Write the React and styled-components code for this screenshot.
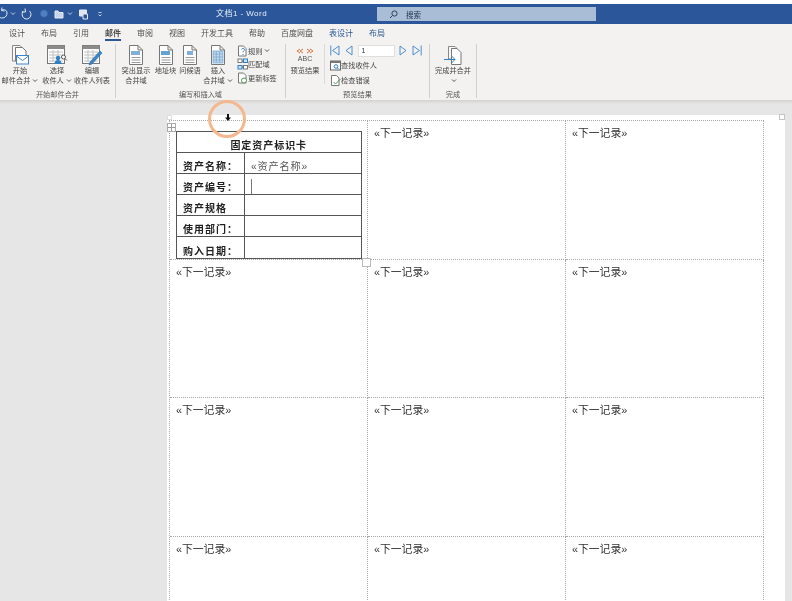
import React from "react";
import styled, { createGlobalStyle } from "styled-components";

const Global = createGlobalStyle`
  html, body { margin: 0; padding: 0; background: #e6e6e6; }
  * { box-sizing: border-box; }
`;
const FONT = `"Liberation Sans", "Noto Sans CJK SC", sans-serif`;

const Shell = styled.div`
  width: 792px; height: 601px; overflow: hidden; display: flex; flex-direction: column;
  font-family: ${FONT}; background: #e6e6e6; filter: blur(0.45px);
`;
const TopGap = styled.div`height: 4px; background: #fff; flex: none;`;
const TitleBar = styled.header`
  height: 20px; flex: none; background: #2b579a; display: grid;
  grid-template-columns: 377px 219px 1fr; align-items: center; position: relative;
`;
const Qat = styled.div`display: flex; align-items: center; height: 100%;`;
const DocTitle = styled.div`
  position: absolute; left: 216px; top: 4px; font-size: 8px; line-height: 12px; color: #e8eef7; white-space: nowrap; letter-spacing: .45px;
`;
const Search = styled.div`
  height: 14px; background: #a9bdd6; display: flex; align-items: center; padding-left: 12px; gap: 8px;
  font-size: 7.5px; color: #1f2f48;
`;
const Tabs = styled.nav`
  height: 18px; flex: none; background: #f3f2f1; display: flex; gap: 16px; padding-left: 9px; align-items: flex-start;
`;
const Tab = styled.div`
  font-size: 8px; line-height: 20px; height: 17px; white-space: nowrap;
  color: ${p => p.$ctx ? "#2b579a" : "#505050"};
  font-weight: ${p => p.$active ? 700 : 400};
  border-bottom: ${p => p.$active ? "2px solid #2b579a" : "0"};
`;
const Ribbon = styled.section`
  height: 59px; flex: none; background: #f3f2f1; display: flex; padding-top: 2px;
  border-bottom: 1px solid #d6d5d3;
`;
const Group = styled.div`
  width: ${p => p.$w}px; flex: none; display: flex; flex-direction: column; border-right: 1px solid #d2d0ce; margin-bottom: 2px;
`;
const GroupBody = styled.div`height: 45px; display: flex; flex: none;`;
const GroupLabel = styled.div`
  font-size: 7.2px; line-height: 10px; text-align: center; color: #555; white-space: nowrap; margin-top: 1px;
`;
const Btn = styled.div`
  width: ${p => p.$w}px; flex: none; display: flex; flex-direction: column; align-items: center;
  font-size: 7.2px; line-height: 10px; color: #444; white-space: nowrap;
`;
const IconSlot = styled.div`height: 22px; display: flex; align-items: flex-end; justify-content: center; flex: none;`;
const SmallList = styled.div`
  display: flex; flex-direction: column; gap: ${p => p.$g ?? 3}px; margin-left: ${p => p.$ml || 0}px; padding-top: ${p => p.$pt || 0}px;
`;
const SmallRow = styled.div`
  display: flex; align-items: center; gap: ${p => p.$gap ?? 0}px; height: 11px; font-size: 7.2px; color: #444; white-space: nowrap;
`;
const Sep = styled.div`width: 1px; height: 40px; background: #dcdbd9; flex: none; margin-top: 0;`;
const RecNum = styled.div`
  width: 37px; height: 12px; background: #fff; border: 1px solid #dedede; font-size: 7px; line-height: 10px; padding-left: 3px; color: #333;
`;
const Shadow = styled.div`height: 3px; flex: none; background: linear-gradient(#d8d7d5, #e6e6e6);`;
const Canvas = styled.main`flex: 1; min-height: 0; padding: 11px 7px 0 167px;`;
const Page = styled.div`
  position: relative; background: #fff; height: 600px; padding: 5px 0 0 2px;
`;
const Grid = styled.div`
  display: grid; grid-template-columns: repeat(3, 198px); grid-auto-rows: 138.7px; width: 595px;
  border-top: 1px dotted #a8a8a8; border-left: 1px dotted #a8a8a8;
`;
const Cell = styled.div`
  border-right: 1px dotted #a8a8a8; border-bottom: 1px dotted #a8a8a8; padding: 6px 0 0 6px;
  font-size: 10.8px; line-height: 13px; color: #333; white-space: nowrap; overflow: visible;
`;
const CardCell = styled(Cell)`padding-top: 10px;`;
const Card = styled.table`
  border-collapse: collapse; width: 185.5px; table-layout: fixed; font-size: 10px; color: #222;
  td { border: 1px solid #555; height: 21.1px; padding: 0 0 0 6px; vertical-align: bottom; line-height: 13px; }
`;
const LabelCol = styled.col`width: 68px;`;
const TitleCell = styled.td`text-align: center; font-weight: 700; letter-spacing: .95px; && { padding-left: 0; }`;
const LabelCell = styled.td`font-weight: 700; letter-spacing: 1px;`;
const ValueCell = styled.td`color: #555; letter-spacing: .8px; font-size: 10.2px;`;
const Caret = styled.span`display: block; width: 1px; height: 15px; background: #777;`;
const Mark = styled.div`
  position: absolute; width: ${p => p.$s}px; height: ${p => p.$s}px; background: #fff;
  border: 1px solid ${p => p.$c || "#bbb"};
  left: ${p => p.$x}px; top: ${p => p.$y}px; display: flex; align-items: center; justify-content: center;
`;
const Ring = styled.div`
  position: absolute; left: 41px; top: -15px; width: 38px; height: 38px; border-radius: 50%;
  border: 3px solid #f5b88e; pointer-events: none;
`;
const Pointer = styled.svg`position: absolute; left: 58px; top: -1px;`;

const S = ({ w = 20, h = 22, children }) => (
  <svg width={w} height={h} viewBox={`0 0 ${w} ${h}`} fill="none">{children}</svg>
);
const Chev = ({ c = "#555" }) => (
  <svg width="6" height="5" viewBox="0 0 6 5" style={{ marginLeft: 2 }}><path d="M1 1.5 3 3.5 5 1.5" stroke={c} fill="none" /></svg>
);
const Doc = ({ x = 3, y = 1, w = 14, h = 19 }) => (
  <path d={`M${x + .5} ${y + .5}H${x + w - 5}L${x + w - .5} ${y + 5}V${y + h - .5}H${x + .5}ZM${x + w - 5} ${y + .5}V${y + 5}H${x + w - .5}`} stroke="#777" fill="#fdfdfd" />
);
const Lines = ({ x = 6, y = 12, n = 3, w = 8 }) => (
  <path d={Array.from({ length: n }, (_, i) => `M${x} ${y + i * 2.5 + .5}h${w}`).join("")} stroke="#9a9a9a" />
);
const MailStart = () => (
  <S>
    <path d="M2.5 1.5H10L13 4.5V17H2.5Z" stroke="#888" fill="#f8f8f8" />
    <path d="M5.5 3.5H12.5L16 7V17H5.5Z" stroke="#777" fill="#fff" />
    <rect x="6.5" y="11.5" width="12" height="8.5" fill="#fff" stroke="#3a85c9" />
    <path d="M6.5 12 12.5 16.5 18.5 12" stroke="#3a85c9" />
  </S>
);
const TableIcon = ({ children }) => (
  <S w={22}>
    <rect x="1.5" y="1.5" width="17" height="18" fill="#fff" stroke="#777" />
    <rect x="1.5" y="1.5" width="17" height="3.5" fill="#8a8a8a" />
    <path d="M3 8h14M3 11h14M3 14h14M3 17h14M7 6v12M12 6v12" stroke="#c0c0c0" />
    {children}
  </S>
);
const Select = () => (
  <TableIcon>
    <circle cx="12" cy="14" r="2.2" fill="#2f7fc7" />
    <path d="M8.5 20c0-3 1.5-4 3.5-4s3.5 1 3.5 4Z" fill="#2f7fc7" />
    <circle cx="17.5" cy="13" r="2" stroke="#555" fill="#fff" />
    <path d="M19 14.5 21 16.5" stroke="#555" />
  </TableIcon>
);
const Edit = () => (
  <TableIcon>
    <path d="M9 18 19 7l2 2-10 11-3 1Z" fill="#3a85c9" stroke="#2c6da8" strokeWidth=".6" />
  </TableIcon>
);
const FieldDoc = ({ fill = "#7fb0d8", grid, kind }) => (
  <S w={16}>
    <Doc x={1} y={1} w={14} h={20} />
    {grid ? (
      <g>
        <rect x="3" y="7" width="10" height="12" fill="#bcd6ec" stroke="#6ea0c9" strokeWidth=".7" />
        <path d="M3 10h10M3 13h10M3 16h10M6.3 7v12M9.6 7v12" stroke="#6ea0c9" strokeWidth=".6" />
      </g>
    ) : (
      <g>
        <rect x={kind === 2 ? 5 : 3} y="7" width={kind === 2 ? 6 : 9} height="4" fill={fill} />
        <Lines x={3.5} y={13} n={3} w={9} />
      </g>
    )}
  </S>
);
const Rule = () => (
  <S w={11} h={12}>
    <path d="M1.5 1h5L9 3.5V11H1.5Z" stroke="#777" fill="#fff" />
    <path d="M4.5 4.5c.5-1.5 3-1.5 3 .3 0 1.2-1.5 1.2-1.5 2.6M6 9v1" stroke="#2f7fc7" />
  </S>
);
const Match = () => (
  <S w={11} h={12}>
    <rect x="1" y="1" width="4" height="3.5" stroke="#777" fill="#fff" />
    <rect x="6.5" y="1" width="4" height="3.5" stroke="#2f7fc7" fill="#cfe2f3" />
    <rect x="1" y="7.5" width="4" height="3.5" stroke="#2f7fc7" fill="#cfe2f3" />
    <rect x="6.5" y="7.5" width="4" height="3.5" stroke="#777" fill="#fff" />
    <path d="M5 3h1.5M5 9h1.5" stroke="#555" />
  </S>
);
const Update = () => (
  <S w={11} h={12}>
    <path d="M1.5 1h5L9 3.5V11H1.5Z" stroke="#777" fill="#fff" />
    <circle cx="7" cy="8.5" r="2.5" stroke="#4d9a57" fill="#fff" />
  </S>
);
const Abc = () => (
  <svg width="30" height="20" viewBox="0 0 30 20" fill="none">
    <path d="M10 3 7 5l3 2M13 3l-3 2 3 2M17 3l3 2-3 2M20 3l3 2-3 2" stroke="#e0713c" />
    <text x="15" y="15" textAnchor="middle" fontSize="7" fill="#555" fontFamily="Liberation Sans">ABC</text>
  </svg>
);
const NavIcon = ({ dir, bar, w = 10 }) => (
  <svg width={w} height="11" viewBox={`0 0 ${w} 11`} fill="none" stroke="#3a85c9" strokeWidth=".9">
    {dir === "l"
      ? <>{bar && <path d="M.8 .5v10" />}<path d={`M${w - 1} 1 ${bar ? 2.5 : 1} 5.5 ${w - 1} 10Z`} /></>
      : <>{bar && <path d={`M${w - .8} .5v10`} />}<path d={`M1 1 ${bar ? w - 2.5 : w - 1} 5.5 1 10Z`} /></>}
  </svg>
);
const Find = () => (
  <S w={11} h={11}>
    <rect x=".5" y="1" width="10" height="9" fill="#fff" stroke="#666" />
    <rect x=".5" y="1" width="10" height="2" fill="#777" />
    <circle cx="6" cy="6.5" r="1.8" stroke="#2f7fc7" />
    <path d="M7.5 8 9 9.5" stroke="#2f7fc7" />
  </S>
);
const Check = () => (
  <S w={11} h={11}>
    <path d="M1.5 .5h5L9 3v7.5H1.5Z" stroke="#777" fill="#fff" />
    <path d="M3.5 7l2 2 5-5" stroke="#4d9a57" />
  </S>
);
const Finish = () => (
  <S w={20} h={21}>
    <path d="M5.5 1.5H12L14 3.5V14H5.5Z" stroke="#888" fill="#f7f7f7" />
    <path d="M8.5 3.5H14L18 7.5V19.5H8.5Z" stroke="#777" fill="#fff" />
    <path d="M1 14.5H12M8.5 11 12 14.5 8.5 18" stroke="#2f7fc7" strokeWidth="1" />
  </S>
);
const tabs = ["设计", "布局", "引用", "邮件", "审阅", "视图", "开发工具", "帮助", "百度网盘", "表设计", "布局"];
const rows = Array.from({ length: 11 });

const QatIcons = () => (
  <Qat>
    <svg width="110" height="20" viewBox="0 0 110 20" fill="none" stroke="#e4ebf5">
      <path d="M-1 13c3 2 8 1 8-4 0-3-3-4-5-3" />
      <path d="M2 3.5 1.5 6.5 4.5 7" />
      <path d="M11 8.5 13 10.5 15 8.5" strokeWidth=".8" />
      <path d="M23 7c-2 3-.5 8 3.5 8s6-5 3-8" />
      <path d="M25 4.5 25.5 8 22 8" />
      <circle cx="44" cy="9.5" r="3.5" fill="#4f7fc0" stroke="#41709f" strokeDasharray="1 1" />
      <path d="M55 14V7h3l1 1.5h4V14Z" fill="#c9d6e9" />
      <path d="M68 8.5 70 10.5 72 8.5" strokeWidth=".8" />
      <path d="M79.5 6h7v6h-7Z" fill="#dfe6f1" />
      <path d="M83 10h4.5v5H83Z" fill="#2b579a" />
      <path d="M98.5 8.5h3M98.5 10.5 100 12l1.5-1.5" strokeWidth=".8" />
    </svg>
  </Qat>
);

export default function App() {
  return (
    <Shell>
      <Global />
      <TopGap />
      <TitleBar>
        <QatIcons />
        <DocTitle>文档1 - Word</DocTitle>
        <Search>
          <svg width="9" height="9" viewBox="0 0 9 9" fill="none" stroke="#2c3f5c">
            <circle cx="5.5" cy="3.5" r="2.6" /><path d="M3.5 5.5 1 8" />
          </svg>
          <span>搜索</span>
        </Search>
      </TitleBar>
      <Tabs>
        {tabs.map((t, i) => <Tab key={i} $active={t === "邮件"} $ctx={i > 8}>{t}</Tab>)}
      </Tabs>
      <Ribbon>
        <Group $w={116}>
          <GroupBody>
            <Btn $w={40}><IconSlot><MailStart /></IconSlot><span>开始</span><span>邮件合并<Chev /></span></Btn>
            <Btn $w={34}><IconSlot><Select /></IconSlot><span>选择</span><span>收件人<Chev /></span></Btn>
            <Btn $w={36}><IconSlot><Edit /></IconSlot><span>编辑</span><span>收件人列表</span></Btn>
          </GroupBody>
          <GroupLabel>开始邮件合并</GroupLabel>
        </Group>
        <Group $w={170}>
          <GroupBody>
            <Btn $w={40}><IconSlot><FieldDoc /></IconSlot><span>突出显示</span><span>合并域</span></Btn>
            <Btn $w={19}><IconSlot><FieldDoc fill="#5fa3d6" /></IconSlot><span>地址块</span></Btn>
            <Btn $w={30}><IconSlot><FieldDoc kind={2} /></IconSlot><span>问候语</span></Btn>
            <Btn $w={26}><IconSlot><FieldDoc grid /></IconSlot><span>插入</span><span>合并域<Chev /></span></Btn>
            <SmallList $ml={6} $pt={1} $g={2.5}>
              <SmallRow><Rule />规则<Chev /></SmallRow>
              <SmallRow><Match />匹配域</SmallRow>
              <SmallRow><Update />更新标签</SmallRow>
            </SmallList>
          </GroupBody>
          <GroupLabel>编写和插入域</GroupLabel>
        </Group>
        <Group $w={144}>
          <GroupBody>
            <Btn $w={38}><IconSlot><Abc /></IconSlot><span>预览结果</span></Btn>
            <Sep />
            <SmallList $ml={5} $pt={1} $g={3.75}>
              <SmallRow $gap={4.75}>
                <NavIcon dir="l" bar w={10} />
                <NavIcon dir="l" w={8} />
                <RecNum>1</RecNum>
                <NavIcon dir="r" w={8} />
                <NavIcon dir="r" bar w={10} />
              </SmallRow>
              <SmallRow><Find />查找收件人</SmallRow>
              <SmallRow><Check />检查错误</SmallRow>
            </SmallList>
          </GroupBody>
          <GroupLabel>预览结果</GroupLabel>
        </Group>
        <Group $w={47}>
          <GroupBody>
            <Btn $w={46}><IconSlot><Finish /></IconSlot><span>完成并合并</span><span><Chev /></span></Btn>
          </GroupBody>
          <GroupLabel>完成</GroupLabel>
        </Group>
      </Ribbon>
      <Shadow />
      <Canvas>
        <Page>
          <Grid>
            <CardCell>
              <Card>
                <colgroup><LabelCol /><col /></colgroup>
                <tbody>
                  <tr><TitleCell colSpan={2}>固定资产标识卡</TitleCell></tr>
                  <tr><LabelCell>资产名称：</LabelCell><ValueCell>«资产名称»</ValueCell></tr>
                  <tr><LabelCell>资产编号：</LabelCell><ValueCell><Caret /></ValueCell></tr>
                  <tr><LabelCell>资产规格</LabelCell><ValueCell /></tr>
                  <tr><LabelCell>使用部门：</LabelCell><ValueCell /></tr>
                  <tr><LabelCell>购入日期：</LabelCell><ValueCell /></tr>
                </tbody>
              </Card>
            </CardCell>
            {rows.map((_, i) => <Cell key={i}>«下一记录»</Cell>)}
          </Grid>
          <Mark $s={5} $x={0} $y={0} $c="#ddd" />
          <Mark $s={6} $x={612} $y={-1} $c="#c4c4c4" />
          <Mark $s={9} $x={0} $y={8} $c="#aaa">
            <svg width="7" height="7" viewBox="0 0 7 7" stroke="#999" fill="none"><path d="M3.5 0v7M0 3.5h7" /></svg>
          </Mark>
          <Mark $s={9} $x={195} $y={143} $c="#bbb" />
          <Ring />
          <Pointer width="6" height="7" viewBox="0 0 6 7"><path d="M2 0h2v3.5h2L3 7 0 3.5h2Z" fill="#111" /></Pointer>
        </Page>
      </Canvas>
    </Shell>
  );
}
